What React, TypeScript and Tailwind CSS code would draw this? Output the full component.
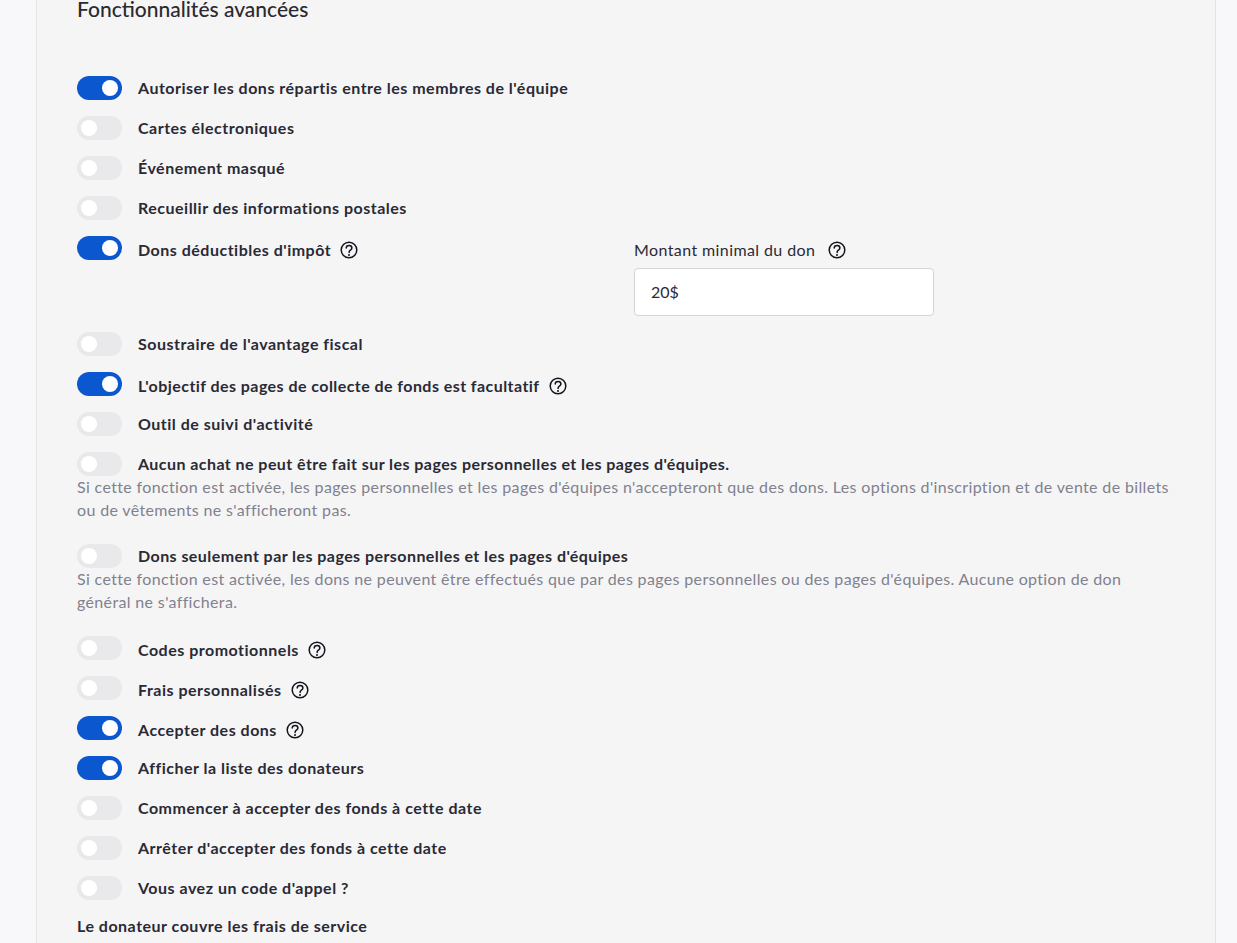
import { ReactNode } from "react";

function Toggle({ on }: { on?: boolean }) {
  return (
    <span
      className={`flex h-6 w-[45px] shrink-0 items-center rounded-full px-1 ${
        on ? "justify-end bg-[#0b57d0]" : "justify-start bg-[#e9e9eb]"
      }`}
    >
      <span className="h-4 w-4 rounded-full bg-white" />
    </span>
  );
}

function Help() {
  return (
    <svg width="18" height="18" viewBox="0 0 18 18" fill="none" className="shrink-0" stroke="#14141e">
      <circle cx="9" cy="9" r="7.8" strokeWidth="1.5" />
      <path d="M6.2 7.1c0-1.6 1.3-2.7 2.9-2.7s2.8 1.1 2.8 2.5c0 1-.6 1.7-1.5 2.3-.9.6-1.3 1.1-1.3 2v.3" strokeWidth="1.5" strokeLinecap="round" />
      <circle cx="9" cy="13.9" r="1" fill="#14141e" stroke="none" />
    </svg>
  );
}

function Row({ on, label, help, tight, children, className = "h-10" }: {
  on?: boolean;
  label: string;
  help?: boolean;
  tight?: boolean;
  children?: ReactNode;
  className?: string;
}) {
  return (
    <div className={`flex items-start ${className}`}>
      <Toggle on={on} />
      <div className={`ml-4 flex h-6 items-center gap-[9px] ${help ? "pt-1" : ""}`}>
        <span className={`text-base font-bold text-[#2a2a36] ${tight ? "tracking-[0.44px]" : "tracking-[0.5px]"}`}>{label}</span>
        {help && <Help />}
      </div>
      {children}
    </div>
  );
}

function Desc({ children }: { children: ReactNode }) {
  return <p className="mt-[-1px] text-base leading-[23px] tracking-[0.35px] text-[#81818f]">{children}</p>;
}

export default function App() {
  return (
    <div className="h-[943px] overflow-hidden bg-[#f8f8fb] pl-9 pr-[21px] font-['Lato',sans-serif]">
      <div className="h-full border-x border-[#e4e4e4] bg-[#f5f5f5] px-10">
        <h2 className="mb-[58px] h-[18px] text-[21px] leading-[18px] font-medium text-[#2a2a30]">
          Fonctionnalités avancées
        </h2>
        <Row on label="Autoriser les dons répartis entre les membres de l'équipe" />
        <Row label="Cartes électroniques" />
        <Row label="Événement masqué" />
        <Row label="Recueillir des informations postales" />
        <Row on label="Dons déductibles d'impôt" help className="h-24">
          <div className="ml-auto mr-[241px] w-[300px] pt-[3px]">
            <div className="flex h-[22px] items-center gap-[13px] text-base tracking-[0.4px] text-[#2a2a36]">
              <span>Montant minimal du don</span>
              <Help />
            </div>
            <div className="mt-[7px] flex h-12 items-center rounded border border-[#d6d6d6] bg-white px-4 text-base text-[#2a2a36]">
              20$
            </div>
          </div>
        </Row>
        <Row label="Soustraire de l'avantage fiscal" />
        <Row on tight label="L'objectif des pages de collecte de fonds est facultatif" help />
        <Row label="Outil de suivi d'activité" />
        <div className="h-[92px]">
          <Row tight label="Aucun achat ne peut être fait sur les pages personnelles et les pages d'équipes." className="h-6" />
          <Desc>
            Si cette fonction est activée, les pages personnelles et les pages d'équipes n'accepteront que des dons. Les options d'inscription et de vente de billets ou de vêtements ne s'afficheront pas.
          </Desc>
        </div>
        <div className="h-[92px]">
          <Row tight label="Dons seulement par les pages personnelles et les pages d'équipes" className="h-6" />
          <Desc>
            Si cette fonction est activée, les dons ne peuvent être effectués que par des pages personnelles ou des pages d'équipes. Aucune option de don général ne s'affichera.
          </Desc>
        </div>
        <Row label="Codes promotionnels" help />
        <Row label="Frais personnalisés" help />
        <Row on label="Accepter des dons" help />
        <Row on label="Afficher la liste des donateurs" />
        <Row label="Commencer à accepter des fonds à cette date" />
        <Row label="Arrêter d'accepter des fonds à cette date" />
        <Row label="Vous avez un code d'appel ?" />
        <p className="text-base font-bold leading-5 tracking-[0.5px] text-[#2a2a36]">Le donateur couvre les frais de service</p>
      </div>
    </div>
  );
}
